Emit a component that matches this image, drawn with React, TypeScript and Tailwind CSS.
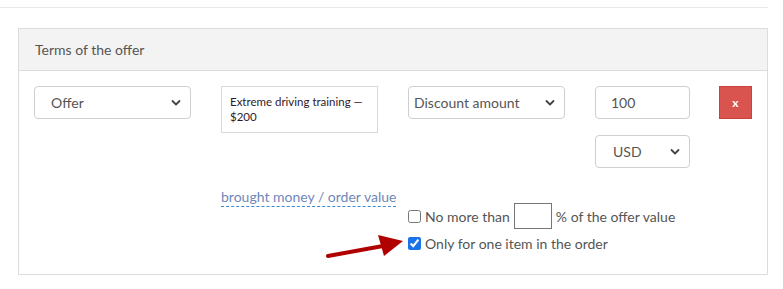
import React from 'react';

const font = { fontFamily: 'Lato, "Open Sans", Arial, sans-serif' };

const Chevron = () => (
  <svg width="10" height="7" viewBox="0 0 10 7" className="pointer-events-none absolute right-[9px] top-1/2 -translate-y-1/2">
    <path d="M1.5 1.5 L5 5 L8.5 1.5" fill="none" stroke="#444" strokeWidth="1.8" strokeLinecap="round" strokeLinejoin="round" />
  </svg>
);

interface FakeSelectProps {
  value: string;
  width: string;
  pad?: string;
}

const FakeSelect: React.FC<FakeSelectProps> = ({ value, width, pad = 'pl-4' }) => (
  <div className={`relative h-[33px] ${width} rounded-[4px] border border-[#cfcfcf] bg-white`}>
    <select
      defaultValue={value}
      className={`h-full w-full appearance-none bg-transparent ${pad} text-[14px] text-[#555] outline-none`}
      style={font}
    >
      <option>{value}</option>
    </select>
    <Chevron />
  </div>
);

export default function App() {
  return (
    <div className="relative h-[289px] w-[783px] bg-white text-[#555]" style={font}>
      {/* top separator */}
      <div className="h-[8px] w-[768px] border-b border-[#eaeaea]" />

      {/* panel */}
      <div className="ml-[18px] mt-[20px] h-[247px] w-[750px] border border-[#dcdcdc]">
        <div className="flex h-[42px] items-center border-b border-[#dcdcdc] bg-[#f3f3f3] pl-[16px] text-[14px] text-[#555]">
          Terms of the offer
        </div>

        <div className="grid grid-cols-[187px_187px_187px_124px_40px] pl-[15px] pt-[15px]">
          {/* col 1 */}
          <div>
            <FakeSelect value="Offer" width="w-[157px]" />
          </div>

          {/* col 2 */}
          <div className="flex flex-col">
            <div className="h-[47px] w-[157px] border border-[#d9d9d9] px-[8px] pt-[7px] text-[11.5px] leading-[15px] text-[#2f1a2c]">
              Extreme driving training — $200
            </div>
            <div className="mt-[51px]">
              <span className="border-b border-dashed border-[#3a8ad6] pb-[1px] text-[14px] text-[#6f87b8]">
                brought money / order value
              </span>
            </div>
          </div>

          {/* col 3 */}
          <div className="flex min-w-0 flex-col">
            <FakeSelect value="Discount amount" width="w-[157px]" pad="pl-[5px]" />
            <div className="mt-[84px] flex w-max flex-col gap-[4px] text-[14px] text-[#555]">
              <label className="flex w-max items-center gap-[4px] whitespace-nowrap">
                <input type="checkbox" className="m-0 h-[13px] w-[13px] shrink-0" />
                <span>No more than</span>
                <span className="h-[26px] w-[38px] shrink-0 border border-[#767676] bg-white" />
                <span>% of the offer value</span>
              </label>
              <label className="flex w-max items-center gap-[4px] whitespace-nowrap">
                <input type="checkbox" defaultChecked className="m-0 h-[13px] w-[13px] shrink-0 accent-[#1a73e8]" />
                <span>Only for one item in the order</span>
              </label>
            </div>
          </div>

          {/* col 4 */}
          <div className="flex flex-col gap-[16px]">
            <div className="flex h-[33px] w-[95px] items-center rounded-[4px] border border-[#cfcfcf] pl-[15px] text-[14px] text-[#555]">
              100
            </div>
            <FakeSelect value="USD" width="w-[95px]" pad="pl-[17px]" />
          </div>

          {/* col 5 */}
          <div>
            <button className="flex h-[33px] w-[33px] items-center justify-center border border-[#c9423e] bg-[#d9534f] text-[12px] font-bold text-white">
              x
            </button>
          </div>
        </div>
      </div>

      {/* annotation arrow */}
      <svg className="absolute left-[325px] top-[232px]" width="82" height="28" viewBox="0 0 82 28">
        <path d="M3 24 L58 14" stroke="#b00000" strokeWidth="4" strokeLinecap="round" />
        <path d="M53 3 L78 9 L59 24 Z" fill="#b00000" />
      </svg>
    </div>
  );
}
